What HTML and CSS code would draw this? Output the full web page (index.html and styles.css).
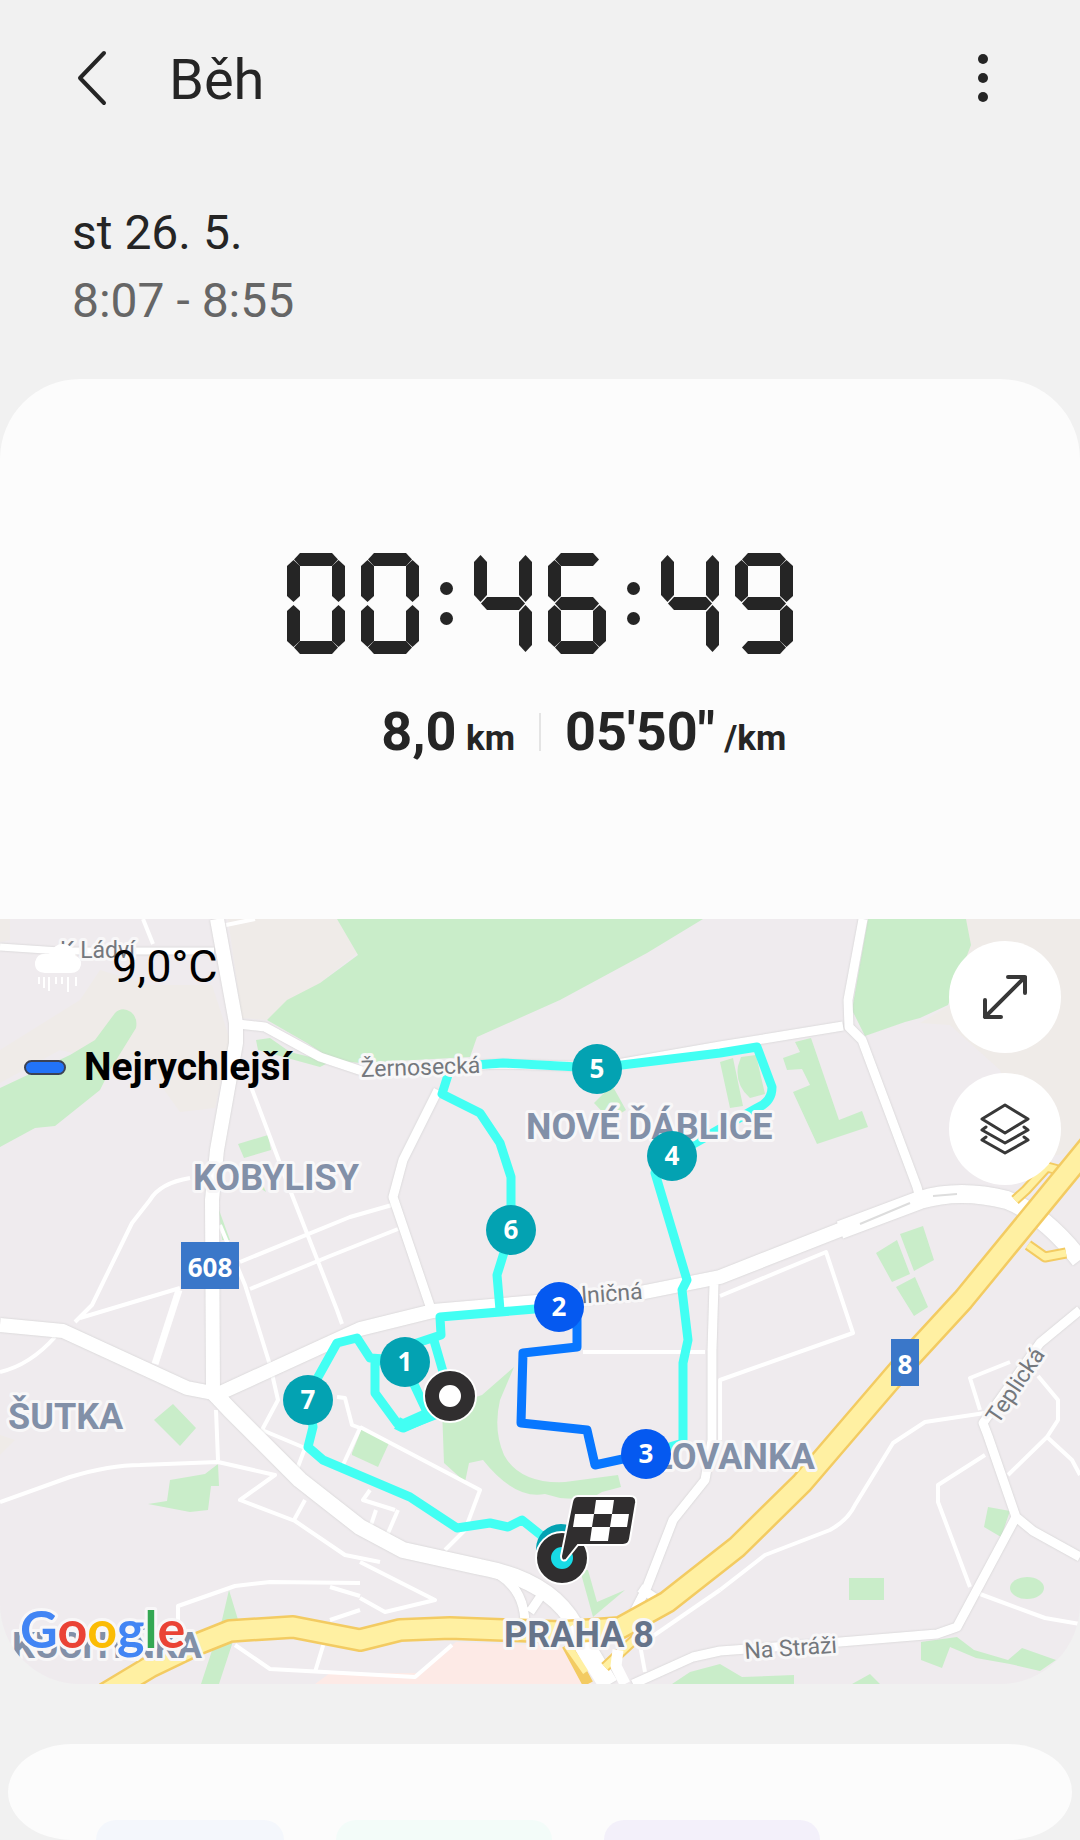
FILE: index.html
```html
<!DOCTYPE html>
<html lang="cs">
  <head>
    <title>Běh</title>
    <meta charset="UTF-8" />
    <meta name="viewport" content="width=device-width, initial-scale=1" />
    <link rel="stylesheet" href="styles.css">
  </head>
  <body>
    <header class="top-bar">
      <button class="icon-button" type="button" aria-label="Zpět">
        <svg width="36" height="60" viewBox="0 0 36 60"><path d="M30 5 L6 30 L30 55" fill="none" stroke="#252525" stroke-width="4" stroke-linecap="round" stroke-linejoin="round" /></svg>
      </button>
      <h1>Běh</h1>
      <button class="icon-button more" type="button" aria-label="Další možnosti">
        <svg width="12" height="60" viewBox="0 0 12 60"><g fill="#252525"><circle cx="6" cy="11" r="5" /><circle cx="6" cy="30" r="5" /><circle cx="6" cy="49" r="5" /></g></svg>
      </button>
    </header>

    <div class="date">
      <p>st 26. 5.</p>
      <p class="hours">8:07 - 8:55</p>
    </div>

    <main>
      <section class="summary">
        <!-- segments: a top, b/c right, d bottom, e/f left, g middle -->
        <div class="clock" role="timer" aria-label="00:46:49">
          <span class="digit"><i class="a"></i><i class="b"></i><i class="c"></i><i class="d"></i><i class="e"></i><i class="f"></i></span>
          <span class="digit"><i class="a"></i><i class="b"></i><i class="c"></i><i class="d"></i><i class="e"></i><i class="f"></i></span>
          <span class="colon"></span>
          <span class="digit four"><i class="b"></i><i class="c"></i><i class="f"></i><i class="g"></i></span>
          <span class="digit"><i class="a"></i><i class="c"></i><i class="d"></i><i class="e"></i><i class="f"></i><i class="g"></i></span>
          <span class="colon"></span>
          <span class="digit four"><i class="b"></i><i class="c"></i><i class="f"></i><i class="g"></i></span>
          <span class="digit"><i class="a"></i><i class="b"></i><i class="c"></i><i class="d"></i><i class="f"></i><i class="g"></i></span>
        </div>
        <div class="stats">
          <div class="distance">8,0 <small>km</small></div>
          <div class="line"></div>
          <div class="pace">05'50" <small>/km</small></div>
        </div>
      </section>

      <section class="map">
        <svg class="map-view" viewBox="0 919 1080 765">
          <rect class="ground" y="919" width="1080" height="765" />

          <g class="field">
            <path d="M0 919H10V940L0 942z M100 970L150 985L212 985L230 1040L215 1108L180 1112L150 1070L60 1050L0 1083V1050L80 1000z" />
            <path d="M228 919H337L357 953L320 983L267 1020L242 1018z" />
            <path d="M966 919H1080V1150L1035 1160L1000 1070L950 1025L920 1023L950 1005z" />
            <path d="M0 1435L15 1440L0 1455z" />
          </g>

          <g class="park">
            <path d="M337 919H703L647 953L560 1000L477 1037L470 1057L360 1063L333 1060L307 1043L267 1020L287 1000L320 983L358 955z" />
            <path d="M256 1040L270 1038L290 1052L330 1062L320 1067L258 1050z" />
            <path d="M0 1088L70 1055L95 1040L115 1013Q122 1006 131 1012Q138 1018 136 1028L110 1070L100 1090L55 1126L35 1128L0 1147z" />
            <path d="M868 919H966L971 945L948 1005L920 1018L905 1022L865 1036L852 1010z" />
            <path d="M238 1144L268 1135L271 1150L244 1158z M260 1188L266 1192L262 1183z M219 1210L230 1240L222 1240z" />
            <path d="M594 1103L612 1085L626 1110L610 1120z M720 1062L733 1058L743 1106L730 1108z M741 1057L756 1055L765 1094L750 1098Q735 1085 738 1066z" />
            <path d="M795 1042L811 1038L839 1120L862 1111L868 1127L817 1144L793 1092L810 1085L802 1069L787 1070L783 1058L800 1052z" />
            <path d="M876 1253L897 1240L910 1274L892 1282z M900 1234L923 1226L934 1260L914 1271z M896 1287L915 1277L928 1307L914 1316z" />
            <path d="M154 1420L173 1404L196 1428L180 1446z M170 1480L205 1474L218 1464L219 1486L211 1486L208 1510L190 1512L148 1504L167 1501z" />
            <path d="M352 1453L362 1428L389 1443L378 1467L352 1455z" />
            <path d="M442 1408L482 1395L514 1367L500 1400Q493 1430 504 1455Q520 1484 565 1482L618 1475L621 1487L602 1492Q590 1501 560 1498L545 1494Q515 1500 483 1460L469 1463L465 1482L444 1463z" />
            <path d="M580 1570L588 1570L597 1602L625 1590L593 1617z M229 1590L239 1623L219 1684H201L222 1620z" />
            <path d="M849 1578H884V1600H849z M988 1507L1010 1511L1001 1537L984 1527z" />
            <ellipse cx="1027" cy="1588" rx="17" ry="11" />
            <path d="M921 1642L957 1637L974 1650L1008 1660L1022 1648L1056 1660L1040 1671L1010 1664L976 1658L950 1647L942 1668L921 1660z" />
            <path d="M690 1672L720 1664L742 1677L794 1675V1684H672z M852 1684L870 1674L880 1684z" />
          </g>
          <path class="hospital" d="M315 1684L330 1673H418L456 1642L560 1646L592 1684z" />

          <!-- small streets -->
          <g class="street">
            <path d="M143 919L153 944 M226 925L255 919 M190 1178Q160 1183 150 1200L132 1223L92 1305L75 1322 M0 1372Q30 1365 55 1337 M80 1318L180 1288 M0 1502L70 1477Q110 1465 140 1465L218 1462L275 1475L240 1500L295 1521L345 1555L380 1562" />
            <path d="M240 1262L350 1217L392 1205 M250 1289L330 1256L398 1229 M250 1084L290 1190L337 1310L342 1324 M220 1225L245 1285L270 1365L278 1400L262 1430L305 1448L296 1472 M216 1410L218 1460" />
            <path d="M337 1397L345 1398L352 1425L360 1428L343 1465 M360 1427L480 1490L465 1530L445 1550 M370 1490L363 1500L395 1510 M398 1510L385 1540 M376 1510L370 1528 M305 1500L294 1520" />
            <path d="M360 1562L435 1600L385 1612L360 1598 M178 1622V1606L235 1586L270 1582L360 1583 M330 1587L360 1596 M235 1645L270 1669L415 1677L452 1645 M330 1623L315 1672 M360 1610L330 1620" />
            <path d="M583 1352H705 M720 1296L826 1252L853 1333L720 1380V1440" />
            <path d="M720 1590L765 1555L830 1530Q848 1520 855 1505L893 1443L925 1422L985 1413 M985 1455L938 1485V1502L970 1587 M1010 1362L970 1378L980 1410 M1038 1376L1058 1400V1420L1047 1437L1008 1475 M1047 1437L1072 1460L1080 1475 M980 1594L1045 1618L1080 1624" />
            <path d="M720 1590L640 1645L645 1672" />
          </g>
          <path class="alley" d="M179 1290L155 1364" />

          <g class="road">
            <path class="w7" d="M0 947L60 951L214 951" />
            <path class="w9" d="M238 1024L265 1027L320 1057L362 1071L500 1064L600 1067L720 1046L843 1026" />
            <path class="w9" d="M863 919L848 1000L849 1027L862 1040L917 1187L921 1202" />
            <path class="w9" d="M438 1090L403 1160L393 1197L432 1312" />
            <path class="w9" d="M714 1284L712 1350V1440L705 1480L673 1520L647 1587L630 1620" />
            <path class="w9" d="M633 1684L693 1657L720 1651L840 1642L937 1634L957 1627L1016 1517L988 1436L983 1423L1040 1343L1080 1310 M1016 1517L1033 1531L1080 1557" />
            <path class="w9" d="M490 1570Q525 1585 525 1625 M545 1590L530 1612 M640 1588L655 1598" />
            <path class="w14" d="M217 919L236 1023L236 1043L217 1150L212 1200L213 1392" />
            <path class="w14" d="M0 1325L63 1331L187 1388L218 1394L277 1367L360 1329L433 1311L560 1300L640 1293L720 1277L860 1222L920 1200" />
            <path class="w18" d="M840 1230L920 1200Q960 1188 1007 1200Q1045 1215 1080 1260" />
            <path class="w16" d="M213 1392L230 1410L300 1480L360 1527L403 1550L480 1567Q550 1580 575 1625L610 1684" />
          </g>
          <path class="median" d="M860 1224L910 1203 M933 1196L957 1194" />

          <g class="highway">
            <path class="ramp edge" d="M1062 1171L1047 1167L1026 1190L1015 1200 M1028 1245L1045 1257L1066 1253" />
            <path class="ramp" d="M1062 1171L1047 1167L1026 1190L1015 1200 M1028 1245L1045 1257L1066 1253" />
            <path class="edge" d="M567 1645L588 1684 M605 1667L650 1625" />
            <path class="core" d="M567 1645L586 1672 M605 1667L650 1625" />
            <path class="edge wide" d="M1090 1145L963 1300L905 1363L802 1483L737 1547L667 1602L620 1628L560 1632L450 1628L400 1630L360 1640L293 1627L230 1631L200 1643L150 1667L105 1694" />
            <path class="core wide" d="M1090 1145L963 1300L905 1363L802 1483L737 1547L667 1602L620 1628L560 1632L450 1628L400 1630L360 1640L293 1627L230 1631L200 1643L150 1667L105 1694" />
          </g>
          <path class="street thick" d="M568 1628L603 1684 M618 1650L616 1666L625 1684" />

          <!-- running route -->
          <g class="route">
            <path d="M448 1075L442 1094L480 1113L500 1143L511 1177V1230L497 1275L500 1310" />
            <path d="M462 1066L503 1063L597 1068L720 1053L757 1047L772 1087Q772 1102 757 1108L672 1156L655 1173L687 1280L682 1290L688 1340L683 1363V1443L646 1454" />
            <path d="M559 1307L440 1317L441 1335L405 1347L375 1363V1393L397 1423L404 1427L440 1413 M433 1337L450 1396 M412 1380L428 1414" />
            <path d="M397 1423L403 1426L430 1414" class="bold" />
            <path d="M400 1360L370 1358L357 1338L337 1343L308 1395L313 1427L308 1447L323 1460L410 1497L457 1528L490 1523L508 1527L522 1520L562 1552" />
            <path class="fastest" d="M577 1310V1347L523 1353L521 1423L587 1430L595 1465L646 1454" />
          </g>

          <g class="street-name">
            <text x="60" y="958">K Ládví</text>
            <text x="361" y="1077" transform="rotate(-2 361 1077)">Žernosecká</text>
            <text x="643" y="1299" text-anchor="end" transform="rotate(-4 643 1299)">Střelničná</text>
            <text x="998" y="1425" transform="rotate(-56 998 1425)">Teplická</text>
            <text x="745" y="1659" transform="rotate(-4 745 1659)">Na Stráži</text>
          </g>
          <g class="district">
            <text x="193" y="1190">KOBYLISY</text>
            <text x="526" y="1139">NOVÉ ĎÁBLICE</text>
            <text x="8" y="1429">ŠUTKA</text>
            <text x="815" y="1469" text-anchor="end">LOVANKA</text>
            <text x="12" y="1658">KUCHYŇKA</text>
            <text class="city" x="504" y="1647">PRAHA 8</text>
          </g>
          <g class="shield">
            <rect x="181" y="1242" width="58" height="47" />
            <text x="210" y="1277">608</text>
            <rect x="891" y="1339" width="28" height="47" />
            <text x="905" y="1374">8</text>
          </g>

          <!-- kilometre markers -->
          <g class="marker">
            <circle cx="561" cy="1549" r="25" />
            <circle cx="405" cy="1362" r="25" /><text x="405" y="1371">1</text>
            <circle cx="672" cy="1156" r="25" /><text x="672" y="1165">4</text>
            <circle cx="597" cy="1069" r="25" /><text x="597" y="1078">5</text>
            <circle cx="511" cy="1230" r="25" /><text x="511" y="1239">6</text>
            <circle cx="308" cy="1400" r="25" /><text x="308" y="1409">7</text>
            <circle class="fast" cx="559" cy="1307" r="25" /><text x="559" y="1316">2</text>
            <circle class="fast" cx="646" cy="1454" r="25" /><text x="646" y="1463">3</text>
          </g>
          <g fill="#302e2f" stroke="#fff" stroke-width="2">
            <circle cx="450" cy="1396" r="26" />
            <circle cx="562" cy="1558" r="26" />
            <circle cx="450" cy="1396" r="10" fill="#fff" />
            <circle cx="562" cy="1558" r="10" fill="#18dbe6" stroke="#18dbe6" />
            <path d="M578 1496H630Q637 1496 636 1503L630 1539Q629 1545 623 1545H578L566 1560Q561 1562 561 1556L572 1502Q573 1496 578 1496z" />
            <path d="M596 1500H614L612 1514H629L627 1527H610L608 1541H590L592 1527H573L575 1514H594z" fill="#fff" stroke="none" />
            <path d="M594 1514H612L610 1527H592z" stroke="none" />
          </g>

          <text class="google" x="20" y="1648"><tspan fill="#4285f4">G</tspan><tspan fill="#ea4335">o</tspan><tspan fill="#fbbc05">o</tspan><tspan fill="#4285f4">g</tspan><tspan fill="#34a853">l</tspan><tspan fill="#ea4335">e</tspan></text>
        </svg>

        <div class="map-info">
          <div class="weather">
            <svg width="48" height="52" viewBox="0 0 48 52">
              <path d="M11 32Q0 31 1 21Q3 11 15 13Q22 0 34 4Q42 8 41 15Q48 17 47 24Q45 32 37 32z" fill="#fff" />
              <path d="M5 36V43 M10 36V47 M15 36V50 M22 36V43 M28 36V43 M34 36V51 M42 36V45" stroke="#fff" stroke-width="2" />
            </svg>
            <span>9,0°C</span>
          </div>
          <div class="legend"><span class="swatch"></span>Nejrychlejší</div>
        </div>

        <div class="map-buttons">
          <button class="round-button" type="button" aria-label="Zvětšit mapu">
            <svg width="48" height="48" viewBox="0 0 48 48"><path d="M4 44L44 4 M27 4H44V20 M4 27V44H20" fill="none" stroke="#383838" stroke-width="4" stroke-linecap="round" stroke-linejoin="round" /></svg>
          </button>
          <button class="round-button" type="button" aria-label="Vrstvy">
            <svg width="52" height="52" viewBox="0 0 52 52"><path d="M26 2L49 16L26 30L3 16z M7 24L3 27L26 40L49 27L45 24 M7 34L3 37L26 50L49 37L45 34" fill="none" stroke="#383838" stroke-width="3" stroke-linecap="round" stroke-linejoin="round" /></svg>
          </button>
        </div>
      </section>

      <section class="next-card">
        <div class="chip blue"></div>
        <div class="chip green"></div>
        <div class="chip purple"></div>
      </section>
    </main>
  </body>
</html>
```

FILE: styles.css
```css
* {
  box-sizing: border-box;
}
body {
  margin: 0;
  background-color: #f1f1f1;
  color: #252525;
  font-family: Roboto, "Noto Sans", sans-serif;
}
h1,
p {
  margin: 0;
  font-weight: normal;
}
button {
  border: none;
  padding: 0;
  background: none;
  cursor: pointer;
}
svg {
  display: block;
}

/* header */
.top-bar {
  display: flex;
  align-items: center;
  height: 155px;
  padding: 0 91px 0 74px;
}
.top-bar h1 {
  margin-left: 59px;
  padding-top: 4px;
  font-size: 56px;
  line-height: 64px;
}
.more {
  margin-left: auto;
}
.date {
  padding: 44px 72px;
  font-size: 48px;
  line-height: 68px;
}
.date .hours {
  color: #666;
}

/* time, distance, pace */
.summary {
  height: 540px;
  padding-top: 174px;
  background-color: #fcfcfc;
  border-radius: 80px 80px 0 0;
}
.clock {
  display: flex;
  justify-content: center;
  gap: 16px;
}
.digit {
  display: grid;
  width: 58px;
  height: 101px;
}
.digit i {
  grid-area: 1 / 1;
  width: 44px;
  height: 13px;
  background-color: #252525;
  clip-path: polygon(0 50%, 6px 0, 38px 0, 100% 50%, 38px 100%, 6px 100%);
}
.digit .a,
.digit .d,
.digit .g {
  justify-self: center;
}
.digit .g {
  align-self: center;
}
.digit .d {
  align-self: end;
}
.digit .b,
.digit .c,
.digit .e,
.digit .f {
  width: 13px;
  height: 42px;
  margin: 7px 0;
  clip-path: polygon(50% 0, 100% 6px, 100% 36px, 50% 100%, 0 36px, 0 6px);
}
.digit .b,
.digit .c {
  justify-self: end;
}
.digit .c,
.digit .e {
  align-self: end;
}
.four .b,
.four .c,
.four .f {
  height: 47px;
  margin: 2px 0;
  clip-path: polygon(50% 0, 100% 7px, 100% 40px, 50% 100%, 0 40px, 0 7px);
}
.colon {
  display: flex;
  flex-direction: column;
  align-items: center;
  justify-content: center;
  gap: 17px;
  width: 23px;
}
.colon::before,
.colon::after {
  content: "";
  width: 13px;
  height: 13px;
  border-radius: 50%;
  background-color: #252525;
}
.stats {
  display: grid;
  grid-template-columns: 1fr 2px 1fr;
  column-gap: 24px;
  align-items: center;
  margin-top: 44px;
  font-size: 54px;
  font-weight: bold;
  line-height: 68px;
}
.stats small {
  font-size: 35px;
  margin-left: -4px;
}
.distance {
  text-align: right;
}
.line {
  height: 38px;
  margin-bottom: 8px;
  background-color: #e4e4e4;
}

/* map */
.map {
  position: relative;
  overflow: hidden;
  border-radius: 0 0 80px 80px;
}
.map-view {
  width: 100%;
  height: auto;
}
.ground {
  fill: #efebee;
}
.field {
  fill: #efebe8;
}
.park {
  fill: #c9edc9;
}
.hospital {
  fill: #fdeae6;
}
.street,
.alley {
  fill: none;
  stroke: #fff;
  stroke-width: 4;
  stroke-linejoin: round;
}
.alley {
  stroke-width: 7;
}
.street.thick {
  stroke-width: 11;
}
.road {
  fill: none;
  stroke: #fff;
  stroke-linejoin: round;
  filter: drop-shadow(0 0 1px #ccc);
}
.w7 {
  stroke-width: 7;
}
.w9 {
  stroke-width: 9;
}
.w14 {
  stroke-width: 14;
}
.w16 {
  stroke-width: 16;
}
.w18 {
  stroke-width: 18;
}
.median {
  stroke: #ddd;
  stroke-width: 2;
}
.highway {
  fill: none;
  stroke: #fff0a2;
  stroke-width: 7;
  stroke-linejoin: round;
}
.highway .edge {
  stroke: #f3cb62;
  stroke-width: 11;
}
.highway .edge.wide {
  stroke-width: 24;
}
.highway .core.wide {
  stroke-width: 19;
}
.route {
  fill: none;
  stroke: #42fff3;
  stroke-width: 9;
  stroke-linejoin: round;
}
.route .bold {
  stroke-width: 13;
}
.route .fastest {
  stroke: #0877ff;
}
.street-name,
.district,
.google {
  stroke: #f8f7f8;
  stroke-width: 6;
  stroke-linejoin: round;
  paint-order: stroke;
}
.street-name {
  fill: #74787d;
  font-size: 23px;
}
.district {
  fill: #8290a8;
  font-size: 36px;
  font-weight: bold;
}
.district .city {
  fill: #66748a;
}
.shield {
  fill: #3a77c9;
}
.shield text,
.marker text {
  fill: #fff;
  font-family: "Noto Sans", sans-serif;
  font-size: 26px;
  font-weight: bold;
  text-anchor: middle;
}
.marker {
  fill: #03a2b2;
}
.marker .fast {
  fill: #0559f0;
}
.google {
  font-family: Lato, sans-serif;
  font-size: 52px;
  font-weight: bold;
}
.map-info {
  position: absolute;
  top: 20px;
  left: 24px;
  color: #000;
}
.weather {
  display: flex;
  align-items: center;
  gap: 30px;
  padding-left: 10px;
  font-size: 45px;
  line-height: 56px;
}
.legend {
  display: flex;
  align-items: center;
  margin-top: 48px;
  font-size: 39px;
  font-weight: bold;
  line-height: 48px;
}
.swatch {
  width: 42px;
  height: 15px;
  margin-right: 18px;
  border: 2px solid #3b4255;
  border-radius: 8px;
  background-color: #2273f7;
}
.map-buttons {
  position: absolute;
  top: 22px;
  right: 19px;
  display: flex;
  flex-direction: column;
  gap: 20px;
}
.round-button {
  display: flex;
  align-items: center;
  justify-content: center;
  width: 112px;
  height: 112px;
  border-radius: 50%;
  background-color: #fff;
}

/* top of the next card */
.next-card {
  display: flex;
  align-items: flex-end;
  gap: 52px;
  height: 96px;
  margin: 60px 8px 0;
  padding-left: 88px;
  overflow: hidden;
  background-color: #fcfcfc;
  border-radius: 64px / 48px;
}
.chip {
  width: 216px;
  height: 20px;
  border-radius: 28px 28px 0 0;
}
.blue {
  width: 188px;
  background-color: #f4f7fc;
}
.green {
  background-color: #f3fcf9;
}
.purple {
  background-color: #f3f0fa;
}
```
